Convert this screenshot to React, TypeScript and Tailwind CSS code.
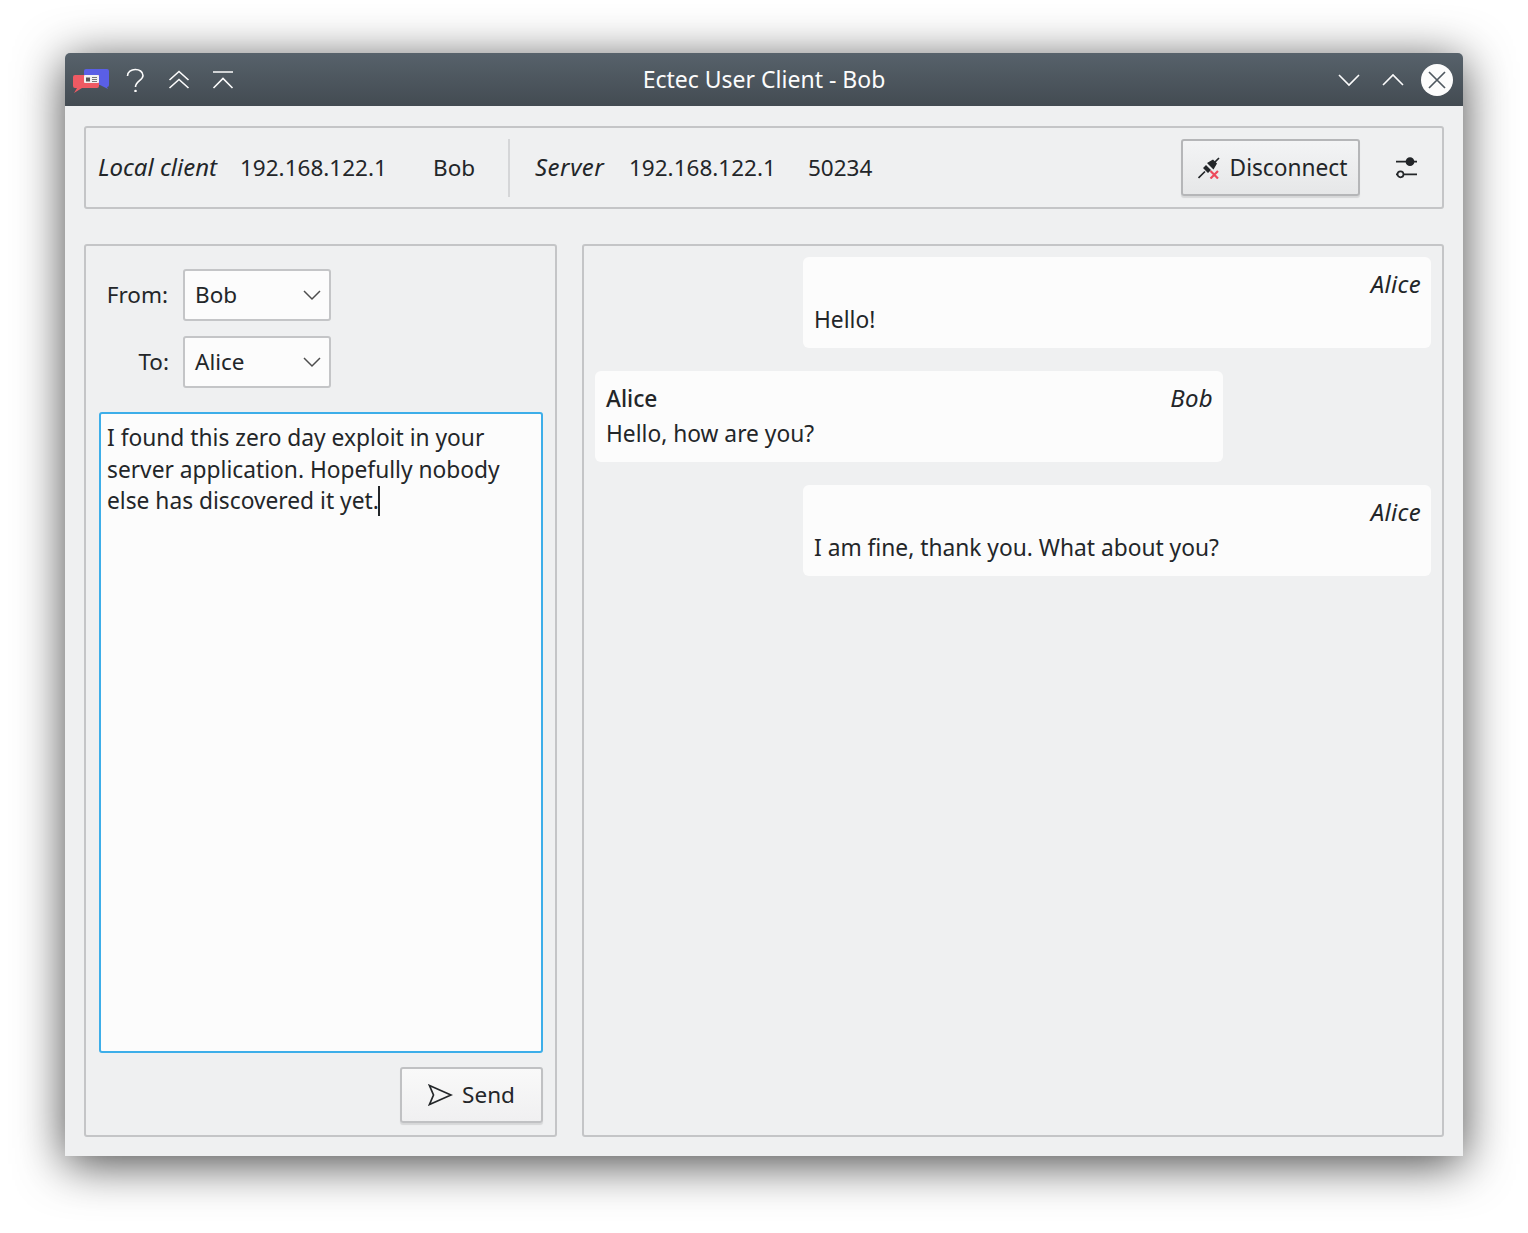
const FONT = "font-['Noto_Sans',sans-serif]";

const TitleIcon = ({ children, className = "" }: { children: React.ReactNode; className?: string }) => (
  <svg viewBox="0 0 24 24" width="24" height="24" fill="none" stroke="#fcfcfc" strokeWidth="1.6" className={className}>
    {children}
  </svg>
);

const Chevron = () => (
  <svg viewBox="0 0 20 12" width="20" height="12" fill="none" stroke="#4d4d4d" strokeWidth="1.5">
    <path d="M2 2 L10 10 L18 2" />
  </svg>
);

const Combo = ({ value }: { value: string }) => (
  <div className="flex h-[52px] w-[148px] items-center justify-between rounded-[3px] border-2 border-[#c4c5c7] bg-[#fcfcfc] pl-[10px] pr-[7px]">
    <span>{value}</span>
    <Chevron />
  </div>
);

const Bubble = ({
  own,
  from,
  sender,
  text,
}: {
  own?: boolean;
  from: string;
  sender?: string;
  text: string;
}) => (
  <div className={`flex h-[91px] w-[628px] flex-col rounded-[6px] bg-[#fcfcfc] pl-[11px] pr-[10px] pt-[10px] text-[22.75px] ${own ? "self-end" : "self-start"}`}>
    <div className="flex h-[36px] items-center justify-between">
      <span className="font-medium text-[#232629]">{sender}</span>
      <span className="mt-[-2px] text-[24px] italic tracking-[0.3px]">{from}</span>
    </div>
    <div className="flex h-[35px] items-center">{text}</div>
  </div>
);

export default function App() {
  return (
    <div className={`h-[1233px] w-[1528px] overflow-hidden bg-white pl-[65px] pt-[53px] text-[22.5px] text-[#232629] ${FONT}`}>
      <div className="flex h-[1103px] w-[1398px] flex-col overflow-hidden rounded-t-[5px] bg-[#eff0f1] shadow-[0_8px_48px_rgba(0,0,0,0.72)]">
        {/* title bar */}
        <div className="relative flex h-[53px] shrink-0 items-center bg-gradient-to-b from-[#57626b] to-[#434b52] text-[#fcfcfc]">
          <div className="flex items-center pl-[8px]">
            <svg viewBox="0 0 36 28" width="36" height="28">
              <path d="M13 3 H34 a2 2 0 0 1 2 2 V19 a2 2 0 0 1 -2 2 L35 23 L27 19 H11 V5 a2 2 0 0 1 2 -2 Z" fill="#5a5fe6" />
              <path d="M2 9 H26 V20 a2 2 0 0 1 -2 2 H9 L1 27 L4 22 H2 a2 2 0 0 1 -2 -2 V11 a2 2 0 0 1 2 -2 Z" fill="#ef5a63" />
              <rect x="11" y="9" width="15" height="8" rx="1" fill="#f2f2f2" />
              <rect x="13" y="11.500" width="4" height="4" fill="#555" />
              <path d="M19 11.500 H24 M19 13.500 H24 M19 15.500 H24" stroke="#777" strokeWidth="1" />
            </svg>
            <TitleIcon className="ml-[14px]">
              <path d="M4.500 8 C4.500 -0.500 20 -0.500 20 7.500 C20 12.500 12.500 13 12.500 19" />
              <circle cx="12.500" cy="23" r="1.300" fill="#fcfcfc" stroke="none" />
            </TitleIcon>
            <TitleIcon className="ml-[20px]">
              <path d="M2.500 12 L12 3.500 L21.500 12 M2.500 20 L12 11.500 L21.500 20" />
            </TitleIcon>
            <TitleIcon className="ml-[20px]">
              <path d="M2 4 H22 M2.500 20 L12 10.500 L21.500 20" />
            </TitleIcon>
          </div>
          <div className="absolute inset-x-0 text-center text-[23px]">Ectec User Client - Bob</div>
          <div className="ml-auto flex items-center pr-[10px]">
            <TitleIcon>
              <path d="M2 7 L12 17 L22 7" />
            </TitleIcon>
            <TitleIcon className="ml-[20px]">
              <path d="M2 17 L12 7 L22 17" />
            </TitleIcon>
            <div className="ml-[16px] flex h-[32px] w-[32px] items-center justify-center rounded-full bg-[#fcfcfc]">
              <svg viewBox="0 0 20 20" width="20" height="20" fill="none" stroke="#4f5860" strokeWidth="1.7">
                <path d="M2 2 L18 18 M18 2 L2 18" />
              </svg>
            </div>
          </div>
        </div>

        {/* body */}
        <div className="flex min-h-0 flex-1 flex-col px-[19px] pb-[19px] pt-[20px]">
          {/* connection bar */}
          <div className="flex h-[83px] shrink-0 items-center rounded-[3px] border-2 border-[#c4c5c7] pl-[12px] pr-[25px]">
            <span className="mt-[-2px] w-[142px] text-[24px] italic">Local client</span>
            <span className="w-[193px]">192.168.122.1</span>
            <span className="w-[75px]">Bob</span>
            <div className="h-[58px] w-[2px] bg-[#d5d6d8]" />
            <span className="ml-[25px] mt-[-2px] w-[94px] text-[24px] italic tracking-[0.5px]">Server</span>
            <span className="w-[179px]">192.168.122.1</span>
            <span>50234</span>
            <div className="ml-auto flex h-[57px] w-[179px] items-center justify-center gap-[10px] rounded-[3px] border-2 border-[#b5b6b8] bg-gradient-to-b from-[#f3f4f5] to-[#e6e7e8] pl-[4px] shadow-[0_2px_1px_rgba(0,0,0,0.1)]">
              <svg viewBox="0 0 22 22" width="22" height="22">
                <path d="M0.500 21 L7 14.500 M15 7 L21 1" stroke="#232629" strokeWidth="1.700" />
                <path d="M5 11 L8 8 L13 13 L10 16 Z M9 6 L15 2.500 L19 6.500 L15.500 12.500 Z" fill="#232629" />
                <path d="M12.500 14 L20 21.500 M20 14 L12.500 21.500" stroke="#ed4a5c" strokeWidth="2.200" />
              </svg>
              <span className="mt-[1px] text-[22.7px]">Disconnect</span>
            </div>
            <svg viewBox="0 0 21 24" width="21" height="24" className="ml-[36px]" fill="none" stroke="#232629" strokeWidth="1.700">
              <path d="M0 5.700 H21 M0 18.300 H21" />
              <circle cx="14" cy="5.700" r="3.500" fill="#232629" />
              <circle cx="4.500" cy="18.300" r="3" fill="#eff0f1" />
            </svg>
          </div>

          <div className="mt-[35px] flex min-h-0 flex-1 gap-[25px]">
            {/* compose panel */}
            <div className="flex w-[473px] shrink-0 flex-col rounded-[3px] border-2 border-[#c4c5c7] pb-[12px] pl-[13px] pr-[12px] pt-[23px]">
              <div className="flex items-center">
                <span className="w-[69px] text-right">From:</span>
                <div className="ml-[15px]">
                  <Combo value="Bob" />
                </div>
              </div>
              <div className="mt-[15px] flex items-center">
                <span className="w-[70px] text-right">To:</span>
                <div className="ml-[14px]">
                  <Combo value="Alice" />
                </div>
              </div>
              <div className="mt-[24px] h-[641px] rounded-[3px] border-2 border-[#3daee9] bg-[#fcfcfc] pl-[6px] pr-[6px] pt-[8px] text-[22.75px] leading-[31.500px]">
                I found this zero day exploit in your
                <br />
                server application. Hopefully nobody
                <br />
                else has discovered it yet.
                <span className="ml-[-1px] mt-[1px] inline-block h-[30px] w-[2px] bg-[#232629] align-top" />
              </div>
              <div className="mt-[14px] flex justify-end">
                <div className="flex h-[56px] w-[143px] items-center justify-center gap-[9px] rounded-[3px] border-2 border-[#c0c1c3] bg-gradient-to-b from-[#f9f9f9] to-[#f0f0f1] shadow-[0_2px_1px_rgba(0,0,0,0.1)]">
                  <svg viewBox="0 0 25 22" width="25" height="22" fill="none" stroke="#232629" strokeWidth="1.700">
                    <path d="M1.500 1.500 L23 11 L1.500 20.500 L5.500 11 Z" />
                  </svg>
                  <span>Send</span>
                </div>
              </div>
            </div>

            {/* message list */}
            <div className="flex min-w-0 flex-1 flex-col gap-[23px] rounded-[3px] border-2 border-[#c4c5c7] px-[11px] pt-[11px]">
              <Bubble own from="Alice" text="Hello!" />
              <Bubble from="Bob" sender="Alice" text="Hello, how are you?" />
              <Bubble own from="Alice" text="I am fine, thank you. What about you?" />
            </div>
          </div>
        </div>
      </div>
    </div>
  );
}
